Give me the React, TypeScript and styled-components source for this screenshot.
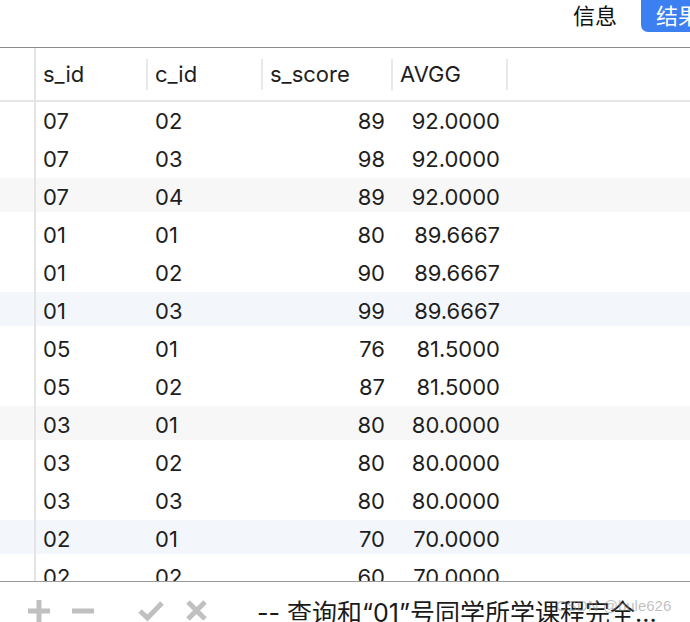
import React from "react";
import styled, { createGlobalStyle } from "styled-components";

type Row = [string, string, string, string];

const rows: Row[] = [
  ["07", "02", "89", "92.0000"],
  ["07", "03", "98", "92.0000"],
  ["07", "04", "89", "92.0000"],
  ["01", "01", "80", "89.6667"],
  ["01", "02", "90", "89.6667"],
  ["01", "03", "99", "89.6667"],
  ["05", "01", "76", "81.5000"],
  ["05", "02", "87", "81.5000"],
  ["03", "01", "80", "80.0000"],
  ["03", "02", "80", "80.0000"],
  ["03", "03", "80", "80.0000"],
  ["02", "01", "70", "70.0000"],
  ["02", "02", "60", "70.0000"],
];

const shadeFor = (i: number) => {
  if (i % 3 !== 2) return "transparent";
  return Math.floor(i / 3) % 2 === 0 ? "#f7f7f7" : "#f3f7fc";
};

const App = () => (
  <>
    <GlobalStyle />
    <Window>
      <TopBar>
        <Tab>信息</Tab>
        <ActiveTab>结果</ActiveTab>
      </TopBar>

      <HeaderRow>
        <Gutter />
        <HeadCell>s_id</HeadCell>
        <HeadCell>c_id</HeadCell>
        <HeadCell>s_score</HeadCell>
        <HeadCell>AVGG</HeadCell>
        <div />
      </HeaderRow>

      <Body>
        {rows.map((r, i) => (
          <DataRow key={i} shade={shadeFor(i)}>
            <Gutter />
            <Cell>{r[0]}</Cell>
            <Cell>{r[1]}</Cell>
            <Cell $right>{r[2]}</Cell>
            <Cell $right>{r[3]}</Cell>
            <div />
          </DataRow>
        ))}
      </Body>

      <Footer>
        <Tools>
          <IconButton>
            <svg width="22" height="22" viewBox="0 0 22 22">
              <rect x="8.5" y="0" width="5" height="22" fill="currentColor" />
              <rect x="0" y="8.5" width="22" height="5" fill="currentColor" />
            </svg>
          </IconButton>
          <IconButton>
            <svg width="22" height="22" viewBox="0 0 22 22">
              <rect x="0" y="8.5" width="22" height="5" fill="currentColor" />
            </svg>
          </IconButton>
        </Tools>
        <Tools>
          <IconButton>
            <svg width="26" height="22" viewBox="0 0 26 22">
              <path
                d="M2 11 L9.5 18 L24 3"
                fill="none"
                stroke="currentColor"
                strokeWidth="5"
              />
            </svg>
          </IconButton>
          <IconButton>
            <svg width="21" height="21" viewBox="0 0 21 21">
              <path
                d="M2 2 L19 19 M19 2 L2 19"
                fill="none"
                stroke="currentColor"
                strokeWidth="5"
              />
            </svg>
          </IconButton>
        </Tools>
        <Query>-- 查询和“01”号同学所学课程完全...</Query>
        <Watermark>CSDN @bule626</Watermark>
      </Footer>
    </Window>
  </>
);

export default App;

const GlobalStyle = createGlobalStyle`
  *, *::before, *::after {
    box-sizing: border-box;
  }
  body {
    margin: 0;
    background: #ffffff;
    font-family: Inter, "Noto Sans CJK SC", sans-serif;
    color: #1e1e1e;
  }
`;

const Window = styled.div`
  width: 690px;
  height: 622px;
  overflow: hidden;
  display: flex;
  flex-direction: column;
  background: #ffffff;
`;

const TopBar = styled.div`
  height: 48px;
  flex: none;
  display: flex;
  justify-content: flex-end;
  align-items: flex-start;
  border-bottom: 1px solid #8a8a8a;
`;

const Tab = styled.div`
  height: 28px;
  display: flex;
  align-items: center;
  font-size: 22px;
  margin-right: 24px;
  color: #111;
`;

const ActiveTab = styled(Tab)`
  margin-right: 0;
  width: 49px;
  padding-left: 15px;
  height: 32px;
  padding-bottom: 4px;
  background: #3c7ff0;
  color: #ffffff;
  border-bottom-left-radius: 7px;
  white-space: nowrap;
  overflow: hidden;
`;

const columns = "36px 112px 115px 130px 115px 1fr";

const HeaderRow = styled.div`
  height: 54px;
  flex: none;
  display: grid;
  grid-template-columns: ${columns};
  align-items: center;
  border-bottom: 2px solid #e6e6e6;
`;

const Gutter = styled.div`
  align-self: stretch;
  border-right: 2px solid #e4e4e4;
`;

const HeadCell = styled.div`
  height: 31px;
  display: flex;
  align-items: center;
  padding-left: 7px;
  font-size: 22px;
  border-right: 2px solid #e8e8e8;
`;

const Body = styled.div`
  height: 479px;
  flex: none;
  overflow: hidden;
`;

const DataRow = styled.div<{ shade: string }>`
  height: 38px;
  display: grid;
  grid-template-columns: ${columns};
  background: linear-gradient(
    ${({ shade }) => shade} 0 34px,
    transparent 34px
  );
`;

const Cell = styled.div<{ $right?: boolean }>`
  height: 34px;
  padding-top: 3px;
  display: flex;
  align-items: center;
  justify-content: ${({ $right }) => ($right ? "flex-end" : "flex-start")};
  padding-left: 7px;
  padding-right: 8px;
  font-size: 22px;
`;

const Footer = styled.div`
  position: relative;
  height: 58px;
  flex: none;
  display: flex;
  align-items: center;
  padding-left: 28px;
  border-top: 1px solid #9a9a9a;
`;

const Tools = styled.div`
  display: flex;
  align-items: center;
  gap: 22px;
  margin-right: 44px;
`;

const IconButton = styled.div`
  display: flex;
  color: #c0c0c0;
`;

const Query = styled.div`
  font-size: 25px;
  white-space: nowrap;
  margin-left: 6px;
  color: #1a1a1a;
`;

const Watermark = styled.div`
  position: absolute;
  left: 556px;
  top: 15px;
  font-size: 15px;
  color: rgba(140, 140, 140, 0.55);
  font-family: "Liberation Sans", sans-serif;
`;
